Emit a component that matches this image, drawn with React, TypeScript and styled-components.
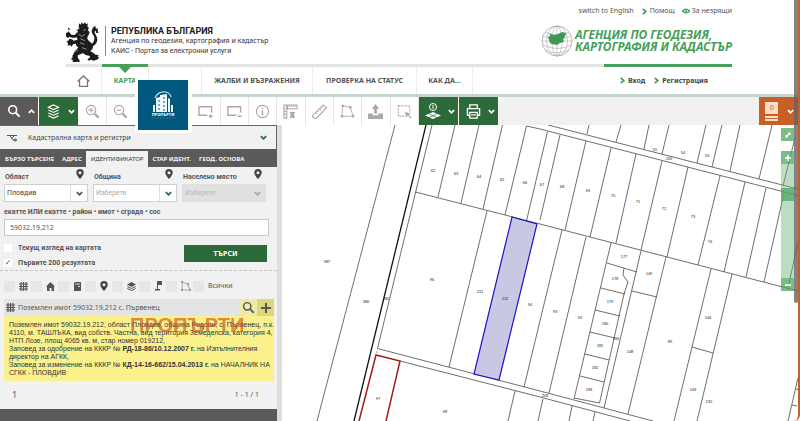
import React from "react";
import styled, { createGlobalStyle } from "styled-components";

const GREEN = "#2d6a39";
const BRIGHT = "#479f5c";
const DARK = "#5a5a5a";
const ORANGE = "#c75f27";

const GlobalStyle = createGlobalStyle`
  *, *::before, *::after { box-sizing: border-box; }
  body { margin: 0; background: #fff; }
  button, input, select { font: inherit; color: inherit; margin: 0; padding: 0; border: 0; border-radius: 0; background: none; }
  a { color: inherit; text-decoration: none; }
`;

const Page = styled.div`
  position: relative;
  display: flex;
  flex-direction: column;
  min-height: 100vh;
  border-right: 2px solid ${ORANGE};
  border-bottom-right-radius: 6px;
  overflow: hidden;
  font: 7px/10px "Noto Sans", "Open Sans", sans-serif;
  color: #555;
  background: #fff;
`;

const Header = styled.header`
  margin: 0 66px;
  display: flex;
  flex-direction: column;
`;

const TopLinks = styled.nav`
  display: flex;
  justify-content: flex-end;
  gap: 7px;
  padding-top: 5px;
  height: 19px;
`;

const IconLink = styled.a`
  display: flex;
  align-items: center;
  gap: 2px;
  height: 12px;
  white-space: nowrap;
`;

const Brand = styled.div`
  display: flex;
  align-items: center;
  height: 45px;
  padding-bottom: 1px;
`;

const Ministry = styled.div`
  margin-left: 5px;
  padding-left: 5px;
  border-left: 1px solid #888;
  color: #333;
  line-height: 10px;
  white-space: nowrap;
`;

const MinistryName = styled.strong`
  display: block;
  font: bold 9px/10px Roboto, sans-serif;
  color: #222;
`;

const MinistrySub = styled.span`
  display: block;
  font-family: Roboto, sans-serif;
`;

const Agency = styled.div`
  margin-left: auto;
  display: flex;
  align-items: center;
  gap: 2px;
  color: ${BRIGHT};
  font: italic bold 12px/12px "Noto Sans", sans-serif;
  white-space: nowrap;
`;

const NavBar = styled.nav`
  display: flex;
  height: 30px;
  border-top: 3px solid #e4e4e4;
`;

const NavItem = styled.a<{ $active?: boolean; $width?: number }>`
  position: relative;
  display: flex;
  align-items: center;
  justify-content: center;
  width: ${(p) => (p.$width ? `${p.$width}px` : "auto")};
  padding: 0 10px;
  border-right: 1px solid #ececec;
  font-weight: bold;
  color: ${(p) => (p.$active ? BRIGHT : "#555")};
  white-space: nowrap;
  ${(p) =>
    p.$active &&
    `&::before { content: ""; position: absolute; top: -3px; left: 0; right: 0; height: 3px; background: ${BRIGHT}; }
     &::after { content: ""; position: absolute; top: 0; left: 50%; margin-left: -6px; border: 6px solid transparent; border-top: 6px solid ${BRIGHT}; border-bottom: 0; }`}
`;

const Account = styled.div`
  position: relative;
  margin-left: auto;
  width: 128px;
  display: flex;
  align-items: center;
  gap: 8px;
  padding-left: 15px;
  font-weight: bold;
  color: #444;
  &::before {
    content: "";
    position: absolute;
    top: -3px;
    left: 0;
    right: 0;
    height: 3px;
    background: ${BRIGHT};
  }
`;

const Toolbar = styled.div`
  display: flex;
  height: 31px;
  border-top: 3px solid #c5d6ce;
  background: #f1f1f1;
`;

const MainTool = styled.button<{ $tone: string; $width: number }>`
  display: flex;
  align-items: center;
  justify-content: space-around;
  width: ${(p) => p.$width}px;
  padding-left: 3px;
  border-right: 1px solid #fff;
  background: ${(p) => p.$tone};
  color: #fff;
`;

const ToolGroup = styled.div`
  display: grid;
  grid-template-columns: repeat(12, 1fr);
  width: 340px;
  background: #fff;
`;

const Tool = styled.button`
  display: grid;
  place-items: center;
  border-right: 1px solid #e6e6e6;
  background: #fff;
  color: #a9a9a9;
`;

const Cart = styled(MainTool)`
  margin-left: auto;
  border: 0;
  padding-left: 2px;
`;

const CartCount = styled.span`
  display: flex;
  flex-direction: column;
  width: 13px;
  color: ${ORANGE};
  line-height: 12px;
  border-bottom: 2px solid #fbe0cc;
  b {
    background: #fbdcc5;
    font-weight: normal;
  }
  &::after {
    content: "";
    height: 5px;
    border-top: 2px solid ${ORANGE};
    border-bottom: 1px solid ${ORANGE};
    background: #fbe0cc;
  }
`;

const Workspace = styled.main`
  flex: 1;
  display: flex;
  min-height: 296px;
`;

const Panel = styled.section`
  display: flex;
  flex-direction: column;
  width: 282px;
  flex: none;
  border-right: 5px solid #dedede;
  background: #f1f1f1;
`;

const Source = styled.button`
  display: flex;
  align-items: center;
  height: 24px;
  padding: 0 9px 0 7px;
  gap: 11px;
  border: solid #666;
  border-width: 1px 1px 0 0;
  text-align: left;
  color: #444;
  span { flex: 1; }
`;

const Tabs = styled.div`
  display: flex;
  height: 18px;
  padding-left: 1px;
  background: ${DARK};
`;

const Tab = styled.button<{ $active?: boolean }>`
  padding: 0 ${(p) => (p.$active ? 5 : 4)}px;
  margin-top: 2px;
  font-size: 6px;
  white-space: nowrap;
  font-weight: ${(p) => (p.$active ? "normal" : "bold")};
  color: ${(p) => (p.$active ? "#333" : "#f4f4f4")};
  background: ${(p) => (p.$active ? "#f1f1f1" : "transparent")};
`;

const Form = styled.form`
  display: flex;
  flex-direction: column;
  padding: 0 8px 0 4px;
  height: 104px;
  border-bottom: 1px dashed #c4c4c4;
  font-family: Roboto, sans-serif;
  font-weight: bold;
`;

const Fields = styled.div`
  display: grid;
  grid-template-columns: repeat(3, 84px);
  gap: 5px;
`;

const FieldHead = styled.label`
  display: flex;
  align-items: center;
  justify-content: space-between;
  height: 17px;
  padding: 2px 4px 0 1px;
  white-space: nowrap;
  svg { margin-top: -6px; }
`;

const SelectBox = styled.div<{ $disabled?: boolean }>`
  display: grid;
  grid-template-columns: 1fr 17px;
  height: 18px;
  border: 1px solid ${(p) => (p.$disabled ? "#dcdcdc" : "#cfcfcf")};
  background: ${(p) => (p.$disabled ? "#dcdcdc" : "#fff")};
  opacity: ${(p) => (p.$disabled ? 0.8 : 1)};
`;

const Select = styled.select<{ $muted?: boolean }>`
  grid-area: 1 / 1 / 2 / 3;
  appearance: none;
  padding-left: 2px;
  font-weight: normal;
  opacity: 1;
  color: ${(p) => (p.$muted ? "#aaa" : "#444")};
`;

const Arrow = styled.span`
  grid-area: 1 / 2 / 2 / 3;
  display: grid;
  place-items: center;
  border-left: 1px solid #ddd;
  color: ${GREEN};
  pointer-events: none;
`;

const CodeLabel = styled.label`
  margin-top: 5px;
  height: 12px;
`;

const CodeInput = styled.input`
  height: 17px;
  width: 265px;
  padding: 0 5px;
  border: 1px solid #c8c8c8;
  background: #fff;
  font: 7px/10px "Noto Sans", sans-serif;
`;

const Options = styled.div`
  display: flex;
  justify-content: space-between;
  padding: 4px 2px 0 0;
`;

const Check = styled.label`
  display: flex;
  align-items: center;
  gap: 6px;
  height: 15px;
`;

const Box = styled.input<{ $size?: number; $tone?: string }>`
  appearance: none;
  display: grid;
  place-items: center;
  width: ${(p) => p.$size ?? 8}px;
  height: ${(p) => p.$size ?? 8}px;
  background: ${(p) => p.$tone ?? "#fff"};
  &:checked::after {
    content: "✓";
    color: ${GREEN};
    font: bold 8px/8px "DejaVu Sans", sans-serif;
  }
`;

const Submit = styled.button`
  width: 83px;
  height: 17px;
  margin-top: 5px;
  background: ${GREEN};
  color: #fff;
  font-family: "Noto Sans", sans-serif;
  font-weight: bold;
`;

const Filters = styled.div`
  display: flex;
  align-items: center;
  height: 28px;
  padding: 2px 0 0 4px;
`;

const Filter = styled.label<{ $last?: boolean }>`
  display: flex;
  align-items: center;
  gap: 4px;
  width: ${(p) => (p.$last ? "auto" : "27px")};
  color: #555;
`;

const Result = styled.article`
  margin: 0 3px 0 4px;
  position: relative;
`;

const ResultHead = styled.div`
  display: flex;
  align-items: center;
  height: 17px;
  background: #e4e4e4;
  padding-left: 2px;
  gap: 3px;
  span { flex: 1; white-space: nowrap; }
`;

const ResultAction = styled.button<{ $tone: string }>`
  display: grid;
  place-items: center;
  width: 17px;
  height: 17px;
  background: ${(p) => p.$tone};
  color: #555;
  & + & { margin-left: -3px; }
`;

const ResultText = styled.p`
  margin: 0;
  padding: 5px 1px 4px 5px;
  background: #faf18c;
  color: #333;
  font: 7px/8px "Liberation Sans", Arial, sans-serif;
  white-space: nowrap;
`;

const Watermark = styled.span`
  position: absolute;
  left: 126px;
  top: 14px;
  font: bold 20px/24px "Liberation Sans", Arial, sans-serif;
  color: rgba(196, 78, 34, 0.65);
  pointer-events: none;
`;

const Pager = styled.div`
  display: flex;
  align-items: center;
  justify-content: space-between;
  height: 28px;
  padding: 0 18px 0 12px;
`;

const PageNumber = styled.span`
  font-size: 9px;
`;

const PanelFoot = styled.div`
  flex: 1;
  background: ${DARK};
`;

const MapArea = styled.section`
  position: relative;
  flex: 1;
  min-width: 0;
  overflow: hidden;
`;

const MapSvg = styled.svg`
  display: block;
  width: 100%;
  height: 100%;
`;

const MapTools = styled.div`
  position: absolute;
  top: 3px;
  right: 4px;
  width: 13px;
  display: flex;
  flex-direction: column;
`;

const MapButton = styled.button`
  display: grid;
  place-items: center;
  height: 13px;
  background: rgba(80, 165, 98, 0.75);
  color: #fff;
`;

const ZoomTrack = styled.div`
  height: 114px;
  padding-top: 24px;
  background: rgba(106, 180, 124, 0.45);
`;

const ZoomHandle = styled.div`
  height: 13px;
  background: rgba(80, 165, 98, 0.75);
`;

const Spacer = styled.div`
  height: 10px;
`;

const ScrollThumb = styled.div`
  position: absolute;
  top: 0;
  right: 0;
  width: 4px;
  height: 303px;
  border-radius: 0 0 2px 2px;
  background: rgba(100, 100, 100, 0.8);
`;

const LogoCard = styled.div`
  position: absolute;
  left: 135px;
  top: 80px;
  width: 57px;
  height: 53px;
  padding: 0 4px 3px 3px;
  background: #fff;
  svg { display: block; }
`;

const Chevron = ({ dir = "down", size = 7, color = "currentColor" }: { dir?: "down" | "up" | "right"; size?: number; color?: string }) => (
  <svg width={size} height={size} viewBox="0 0 8 8" fill="none" stroke={color} strokeWidth="2">
    <path d={dir === "down" ? "M1 2.5 4 5.5 7 2.5" : dir === "up" ? "M1 5.5 4 2.5 7 5.5" : "M2 1 5.5 4 2 7"} />
  </svg>
);

const Pin = () => (
  <svg width="8" height="10" viewBox="0 0 8 10">
    <path fill="#444" fillRule="evenodd" d="M4 0a3.7 3.7 0 0 1 3.7 3.7C7.700 6 4 10 4 10S.3 6 .3 3.700A3.700 3.700 0 0 1 4 0Zm0 2.200a1.500 1.500 0 1 0 0 3 1.500 1.500 0 0 0 0-3Z" />
  </svg>
);

const Hash = () => (
  <svg width="9" height="9" viewBox="0 0 9 9" stroke="#555" strokeWidth="1.200">
    <path d="M2 0v9M4.500 0v9M7 0v9M0 2h9M0 4.500h9M0 7h9" />
  </svg>
);

const Lion = () => (
  <svg width="34" height="41" viewBox="202 65 102 123" fill="#1c1c1c">
    <path d="M241 72l5 4 3-7 5 6 5-7 3 7 6-3-2 9c6 4 4 10 1 12l6 5c-2 9-8 14-7 20 3 7 10 9 14 15 4-4 8-11 7-19-1-7-8-10-8-18-1-9 6-15 12-17-2 4 0 6 1 8 3 1 4 4 2 7-3-1-7 1-6 6 2 6 8 12 8 20 0 10-7 18-13 21 0 7-3 11-8 14 5 4 11 6 15 11l10 1-3 5 5 4-8 5-9 3-8-3-7 3-4-4 7-5 1-5c-10-1-17-4-21-9-5 4-12 4-16 8l1 8 5 6-1 7-6-3-4 5-4-4-7 1 2-6-6-4 5-5-1-5c4-2 4-9 7-13 3-5 9-7 11-12-5-2-8-6-7-11l-9 2-4 7-5-5-7 2 1-7-4-6 7-3 1-5 8 2 5 4 11-3c1-3-1-6-4-7-6 3-14 1-20-2l-5 4-4-4-5-1 3-5-3-6 7 1 4-5 5 5 4 5 10 1c3-3 5-6 9-8l1-4-5-2 7-4Z" />
    <path d="M237 88l6-1M240 105l10 6 9-6M245 118l14 6M244 130l13 5M264 150l-14-5M226 158l12-6M284 78l-4 13M254 93l7-2" stroke="#fff" strokeWidth="1.500" fill="none" />
    <path d="M291 92l7-5-1 8 3 5-8 1zM211 84l-4 6 7 3z" />
  </svg>
);

const Globe = () => (
  <svg width="32" height="32" viewBox="0 0 32 32" fill="none" stroke="#aaa" strokeWidth=".6">
    <circle cx="16" cy="16" r="15" stroke="#888" />
    <ellipse cx="16" cy="16" rx="10.500" ry="15" />
    <ellipse cx="16" cy="16" rx="5" ry="15" />
    <path d="M16 1v30M1 16h30M4 7q12 7 24 0M2 11q14 7 28 0M2 20q14 7 28 0M4 25q12 6 24 0" />
    <path fill="#3f9853" stroke="none" d="m9 8 3 2 5-1 4-2 4 1-1 4-2 2 1 3-4 1-3 2-5-1-2-1-1-3-1-3 2-1Z" />
  </svg>
);

const PropertyLogo = () => (
  <svg width="50" height="50" viewBox="0 0 50 50">
    <path fill="#00587f" d="M0 0h50v50H0z" />
    <path fill="none" stroke="#b9e3ee" strokeWidth="1.200" d="M17 18q3-7 11-6 4 1 5 5" />
    <path fill="#eef8fb" d="M18 18l4-1v-2l7-1v18H18zM30 18l2 1v13h-2zM15 25h2v7h-2zM33 25h2v7h-2z" />
    <path stroke="#00587f" d="M20 21h2M20 25h2M20 29h2M25 18h2M25 22h2M25 26h2M25 30h2" />
    <text x="25" y="36" textAnchor="middle" fill="#fff" fontFamily="Noto Sans" fontWeight="bold" fontSize="4">ПРОПЪРТИ</text>
    <path stroke="#5495af" strokeWidth=".6" strokeDasharray="2 1" d="M13 38h25" />
  </svg>
);

const glyphs: Record<string, React.ReactNode> = {
  search: <><circle cx="6.500" cy="6.500" r="4.500" strokeWidth="1.800" /><path strokeWidth="2.200" d="m10 10 4.500 4.500" /></>,
  layers: <path strokeWidth="1.200" d="m8 1 5.500 2.500L8 6 2.500 3.500zM2.500 6.500 8 9l5.500-2.500M2.500 9.500 8 12l5.500-2.500M2.500 12.500 8 15l5.500-2.500" />,
  zoomIn: <><circle cx="6.500" cy="6.500" r="5" /><path d="M4 6.500h5M6.500 4v5" /><path strokeWidth="2.400" d="m10.500 10.500 4 4" /></>,
  zoomOut: <><circle cx="6.500" cy="6.500" r="5" /><path d="M4 6.500h5" /><path strokeWidth="2.400" d="m10.500 10.500 4 4" /></>,
  hand: <path d="M4 14V6l2-3v5V2l2-1v6V2l2 1v5l3-1-2 7z" />,
  globe: <><circle cx="8" cy="8" r="6" /><path d="M2 8h12M8 2v12" /></>,
  rectPlus: <path strokeWidth="1.500" d="M10 12H1V3h13.500v6M13.500 11v4M11.500 13h4" />,
  rectMinus: <path strokeWidth="1.500" d="M10 12H1V3h13.500v6M11.500 13h4" />,
  info: <><circle cx="8" cy="8" r="6.500" /><path strokeWidth="1.600" d="M8 7v5M8 4v1.500" /></>,
  rulers: <><path d="M5 1h10v4H5zM1 1h3v14H1zM7 1v2M9 1v2M11 1v2M13 1v2M1 5h2M1 8h2M1 11h2" /><path fill="currentColor" d="m8 9 4 0-1 2 1 3H8l1-2z" /></>,
  ruler: <path d="m0 13 12-12 3.500 3L4 16zM4 9l1.500 1.500M6 7l1 1M8 5l1.500 1.500M10 3l1 1" />,
  polygon: <><path strokeWidth=".9" d="m3 2 8 1.500L14 13H2z" /><path fill="currentColor" strokeWidth=".5" d="M2 1h2v2H2zM10 2.500h2v2h-2zM13 12h2v2h-2zM1 12h2v2H1z" /></>,
  upload: <path fill="currentColor" stroke="none" d="M8 0l4 5H9.500v5h-3V5H4zM0 10h5v2h6v-2h5v6H0z" />,
  marquee: <><path strokeDasharray="2 1.200" d="M1.500 2h12v11h-12z" strokeWidth="1.300" /><path fill="currentColor" stroke="#fff" strokeWidth=".5" d="m8 8 7 2-2.500 1.500L16 15l-1 1-3.500-3.500L10 15z" /></>,
  identify: <><circle cx="8" cy="4" r="3.500" strokeWidth="1" /><path strokeWidth="1" d="M8 2v4" /><path fill="currentColor" stroke="none" d="m8 9 8 3.500L8 16l-8-3.500z" /><path stroke={GREEN} strokeWidth=".7" d="m4 11 8 3.500M12 11l-8 3.500" /></>,
  print: <path strokeWidth="1.400" d="M4 5V1h8v4M4 12H1.500V5h13v7H12M4 9h8v6H4zM5.500 11.500h5" />,
};

const Glyph = ({ name, size = 15 }: { name: string; size?: number }) => (
  <svg width={size} height={size} viewBox="0 0 16 16" fill="none" stroke="currentColor" strokeWidth="1.200">
    {glyphs[name]}
  </svg>
);

const filterIcons: { name: string; icon: React.ReactNode }[] = [
  { name: "Имоти", icon: <Hash /> },
  { name: "Сгради", icon: <svg width="9" height="9" viewBox="0 0 9 9"><path fill="#555" d="M4.500 0 9 4.500H8V9H5.500V6h-2v3H1V4.500H0z" /></svg> },
  { name: "Обекти", icon: <svg width="9" height="9" viewBox="0 0 9 9"><path fill="#555" d="M1 1l1-1h6v9H1z" /><path stroke="#ddd" strokeWidth="1.200" d="M2 2h5M5 4.500h2" /></svg> },
  { name: "Адреси", icon: <Pin /> },
  { name: "Слоеве", icon: <svg width="9" height="9" viewBox="0 0 9 9"><path fill="#555" d="m4.500 0 4.500 2.500L4.500 5 0 2.500z" /><path fill="none" stroke="#555" d="M.3 4.500l4.200 2 4.200-2M.3 6.500l4.200 2 4.200-2" /></svg> },
  { name: "Точки", icon: <svg width="9" height="10" viewBox="0 0 9 10"><path fill="#555" d="M3 0h5v4H4v4h2v1.500H1V8h2z" /></svg> },
  { name: "Полигони", icon: <svg width="10" height="10" viewBox="0 0 10 10"><path fill="none" stroke="#aaa" d="m1.500 1 5 2L9 9H1z" /><path fill="#999" d="M0 0h2v2H0zM0 8h2v2H0zM8 8h2v2H8zM6 2h2v2H6z" /></svg> },
];

const parcelLines = [
  "M395 125 317 421", "M432 125 377.500 348.500 540 391 653 421",
  "M455 125 438 197", "M479 125 461 203", "M502.500 125 483 209", "M526.500 126 505 215", "M547.500 131.500 526.500 221",
  "M415.500 192 540 224 736.500 275 798 291", "M548 125 798 189", "M526.500 126 540 129 798 195.500",
  "M560 135 540 220", "M586 141 565 230", "M611 148 590 237", "M636 154 616 243", "M662 161 641 250", "M688 167 667 257",
  "M720 176 698 265", "M745 182 724 272", "M766 188 746 277", "M784 193 764 282",
  "M589 125 587 134", "M621 125 616 142", "M649 125 644 149", "M669 125 662 154", "M706 125 697 163", "M722 125 712 167",
  "M740 125 730 171", "M772 125 759 179", "M795 138 783 186",
  "M487 211 449 367", "M562 230 524 387", "M586 237 549 393", "M611 243 574 399",
  "M607 263 637 272", "M641 251 604 408", "M666 257 628 414", "M711 269 674 421", "M732 274 697 421", "M692 347 713 353",
  "M624 268 623 275 628 282 624 294 599.500 403 574 398",
  "M601 288 625 294", "M595 310 620 316", "M590 332 615 338", "M585 354 609 360", "M580 376 604 382", "M632 291 657 297",
  "M400 361 540 397 630 421", "M515 391 508 421", "M543 399 538 421", "M572 406 569 421", "M595 412 593 421",
  "M798 378 788 421", "M796 389 800 390", "M792 405 797 406", "M798 242 788 288",
];

const parcelLabels: [string, number, number][] = [
  ["387", 327, 262], ["96", 432, 280], ["211", 480, 292], ["212", 505, 299], ["94", 530, 305], ["380", 366, 302], ["382", 386, 299],
  ["97", 378, 399], ["98", 445, 412], ["62", 433, 171], ["63", 456, 174], ["64", 479, 177], ["65", 502, 180], ["66", 525, 183],
  ["67", 542, 185], ["68", 562, 187], ["69", 588, 191], ["70", 613, 196], ["71", 638, 202], ["72", 664, 209], ["73", 693, 217],
  ["74", 710, 242], ["55", 655, 150], ["54", 683, 153], ["53", 707, 156], ["205", 669, 159], ["177", 624, 257], ["149", 649, 274],
  ["93", 555, 312], ["92", 580, 318], ["178", 615, 279], ["179", 610, 302], ["180", 605, 324], ["181", 600, 346], ["182", 595, 368],
  ["183", 589, 390], ["184", 616, 339], ["148", 630, 352], ["89", 670, 342], ["144", 708, 318], ["143", 693, 390], ["232", 709, 402],
  ["208", 545, 396],
];

const CadastreMap = () => (
  <MapSvg viewBox="282 125 516 296" preserveAspectRatio="xMinYMin slice" role="img" aria-label="Кадастрална карта">
    <path d={parcelLines.join("")} fill="none" stroke="#4a4a4a" strokeWidth=".8" />
    <path d="M426 125 354 421" stroke="#111" strokeWidth="1.300" />
    <path d="M512 217 537 224 499 380 474 374Z" fill="#c9c8e4" stroke="#1d12c8" strokeWidth="1.200" />
    <path d="M359 421 376 355 400 361 386 421" fill="none" stroke="#a01f15" strokeWidth="1.500" />
    <circle cx="377" cy="352" r=".6" />
    <g fontFamily="Liberation Sans" fontSize="4" fill="#222" textAnchor="middle">
      {parcelLabels.map(([label, x, y]) => (
        <text key={label} x={x} y={y + 1}>{label}</text>
      ))}
    </g>
  </MapSvg>
);

export default function App() {
  return (
    <>
      <GlobalStyle />
      <Page lang="bg">
        <Header>
          <TopLinks>
            <IconLink href="#en">switch to English</IconLink>
            <IconLink href="#help"><Chevron dir="right" color={BRIGHT} />Помощ</IconLink>
            <IconLink href="#a11y">
              <svg width="8" height="6" viewBox="0 0 8 6"><path d="M.5 3Q4-.8 7.500 3 4 6.800.5 3Z" fill="none" stroke={BRIGHT} strokeWidth="1.400" /><circle cx="4" cy="3" r="1" fill={BRIGHT} /></svg>
              За незрящи
            </IconLink>
          </TopLinks>
          <Brand>
            <Lion />
            <Ministry>
              <MinistryName>РЕПУБЛИКА БЪЛГАРИЯ</MinistryName>
              Агенция по геодезия, картография и кадастър
              <MinistrySub>КАИС - Портал за електронни услуги</MinistrySub>
            </Ministry>
            <Agency>
              <Globe />
              <div>АГЕНЦИЯ ПО ГЕОДЕЗИЯ,<br />КАРТОГРАФИЯ И КАДАСТЪР</div>
            </Agency>
          </Brand>
          <NavBar>
            <NavItem href="#home" $width={36} aria-label="Начало">
              <svg width="13" height="12" viewBox="0 0 13 12" fill="none" stroke="#777" strokeWidth="1.300"><path d="M.5 6.500 6.500 1l6 5.500M2.500 5v6.300h8V5" /></svg>
            </NavItem>
            <NavItem href="#map" $active $width={47}>КАРТА</NavItem>
            <NavItem href="#services" $width={53} aria-label="Услуги" />
            <NavItem href="#complaints" $width={111}>ЖАЛБИ И ВЪЗРАЖЕНИЯ</NavItem>
            <NavItem href="#status" $width={104}>ПРОВЕРКА НА СТАТУС</NavItem>
            <NavItem href="#how" $width={56}>КАК ДА...</NavItem>
            <Account>
              <IconLink href="#login"><Chevron dir="right" color={BRIGHT} />Вход</IconLink>
              <IconLink href="#register"><Chevron dir="right" color={BRIGHT} />Регистрация</IconLink>
            </Account>
          </NavBar>
        </Header>

        <Toolbar>
          <MainTool $tone={DARK} $width={39} aria-label="Търсене"><Glyph name="search" size={14} /><Chevron dir="up" /></MainTool>
          <MainTool $tone={GREEN} $width={40} aria-label="Слоеве"><Glyph name="layers" /><Chevron /></MainTool>
          <ToolGroup>
            {["zoomIn", "zoomOut", "hand", "globe", "rectPlus", "rectMinus", "info", "rulers", "ruler", "polygon", "upload", "marquee"].map((name) => (
              <Tool key={name} aria-label={name}><Glyph name={name} /></Tool>
            ))}
          </ToolGroup>
          <MainTool $tone={GREEN} $width={40} aria-label="Информация"><Glyph name="identify" size={16} /><Chevron /></MainTool>
          <MainTool $tone={GREEN} $width={40} aria-label="Печат"><Glyph name="print" /><Chevron /></MainTool>
          <Cart $tone={ORANGE} $width={39} aria-label="Кошница"><CartCount><b>0</b></CartCount><Chevron /></Cart>
        </Toolbar>

        <Workspace>
          <Panel>
            <Source>
              <svg width="10" height="8" viewBox="0 0 10 8" fill="none" stroke={GREEN}><path d="M0 1.500h3l3 4.500h3M3 1.500h7M5 4l2-2" /><circle cx="8.500" cy="6" r="1" /></svg>
              <span>Кадастрална карта и регистри</span>
              <Chevron color={GREEN} />
            </Source>
            <Tabs>
              <Tab>БЪРЗО ТЪРСЕНЕ</Tab>
              <Tab>АДРЕС</Tab>
              <Tab $active>ИДЕНТИФИКАТОР</Tab>
              <Tab>СТАР ИДЕНТ.</Tab>
              <Tab>ГЕОД. ОСНОВА</Tab>
            </Tabs>
            <Form onSubmit={(e) => e.preventDefault()}>
              <Fields>
                <div>
                  <FieldHead htmlFor="region">Област<Pin /></FieldHead>
                  <SelectBox><Select id="region"><option>Пловдив</option></Select><Arrow><Chevron /></Arrow></SelectBox>
                </div>
                <div>
                  <FieldHead htmlFor="municipality">Община<Pin /></FieldHead>
                  <SelectBox><Select id="municipality" $muted><option>Изберете</option></Select><Arrow><Chevron /></Arrow></SelectBox>
                </div>
                <div>
                  <FieldHead htmlFor="place">Населено място<Pin /></FieldHead>
                  <SelectBox $disabled><Select id="place" $muted disabled><option>Изберете</option></Select><Arrow><Chevron color="#7fa587" /></Arrow></SelectBox>
                </div>
              </Fields>
              <CodeLabel htmlFor="code">екатте ИЛИ екатте • район • имот • сграда • сос</CodeLabel>
              <CodeInput id="code" defaultValue="59032.19.212" />
              <Options>
                <div>
                  <Check><Box type="checkbox" />Текущ изглед на картата</Check>
                  <Check><Box type="checkbox" defaultChecked />Първите 200 резултата</Check>
                </div>
                <Submit type="submit">ТЪРСИ</Submit>
              </Options>
            </Form>
            <Filters>
              {filterIcons.map((f) => (
                <Filter key={f.name}>
                  <Box type="checkbox" $size={11} $tone="#e6e6e6" aria-label={f.name} />
                  {f.icon}
                </Filter>
              ))}
              <Filter $last><Box type="checkbox" $size={11} $tone="#e6e6e6" />Всички</Filter>
            </Filters>
            <Result>
              <ResultHead>
                <Hash />
                <span>Поземлен имот 59032.19.212 с. Първенец</span>
                <ResultAction $tone="#eeeaa8" aria-label="Покажи"><Glyph name="search" size={13} /></ResultAction>
                <ResultAction $tone="#ddd67c" aria-label="Добави">
                  <svg width="10" height="10" viewBox="0 0 10 10"><path stroke="#555" strokeWidth="2" d="M5 0v10M0 5h10" /></svg>
                </ResultAction>
              </ResultHead>
              <ResultText>
                Поземлен имот 59032.19.212, област Пловдив, община Родопи, с. Първенец, п.к.<br />
                4110, м. ТАШЛЪКА, вид собств. Частна, вид територия Земеделска, категория 4,<br />
                НТП Лозе, площ 4065 кв. м, стар номер 019212,<br />
                Заповед за одобрение на КККР № <b>РД-18-86/10.12.2007 г.</b> на Изпълнителния<br />
                директор на АГКК,<br />
                Заповед за изменение на КККР № <b>КД-14-16-662/15.04.2013 г.</b> на НАЧАЛНИК НА<br />
                СГКК - ПЛОВДИВ
              </ResultText>
              <Watermark>ПРОПЪРТИ</Watermark>
            </Result>
            <Pager><PageNumber>1</PageNumber><span>1 - 1 / 1</span></Pager>
            <PanelFoot />
          </Panel>
          <MapArea>
            <CadastreMap />
            <MapTools>
              <MapButton aria-label="Цял екран"><svg width="6" height="6" viewBox="0 0 6 6" stroke="currentColor" strokeWidth="1.200" fill="none"><path d="M1 5 5 1M3 1h2v2M1 3v2h2" /></svg></MapButton>
              <Spacer />
              <MapButton aria-label="Приближи"><svg width="6" height="6" viewBox="0 0 6 6" stroke="currentColor" strokeWidth="1.500"><path d="M3 0v6M0 3h6" /></svg></MapButton>
              <ZoomTrack><ZoomHandle /></ZoomTrack>
              <MapButton aria-label="Отдалечи"><svg width="6" height="6" viewBox="0 0 6 6" stroke="currentColor" strokeWidth="1.500"><path d="M0 3h6" /></svg></MapButton>
            </MapTools>
          </MapArea>
        </Workspace>
        <LogoCard><PropertyLogo /></LogoCard>
        <ScrollThumb />
      </Page>
    </>
  );
}
